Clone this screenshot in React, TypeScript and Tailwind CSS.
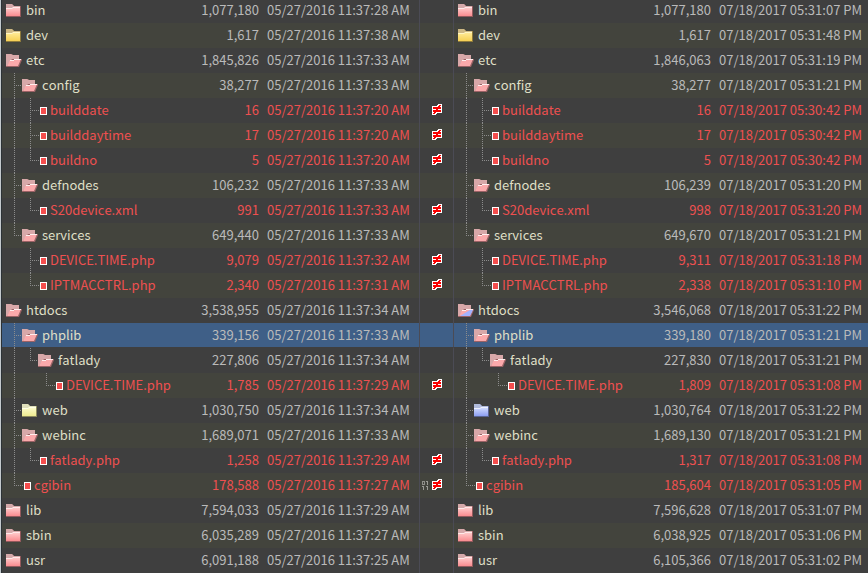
import React from "react";

type Kind = "closed" | "open" | "file";
type Tone = "pink" | "yellow" | "pale" | "blue" | "mixed";

interface Side {
  size: string;
  date: string;
  tone?: Tone;
}

interface Entry {
  name: string;
  kind: Kind;
  // One letter per indent level: "|" runs through, "t" branches, "l" ends, "." is blank
  guides: string;
  left: Side;
  right: Side;
  binary?: boolean;
  selected?: boolean;
}

const entry = (
  name: string,
  kind: Kind,
  guides: string,
  leftSize: string,
  leftTime: string,
  rightSize: string,
  rightTime: string,
  extra: { leftTone?: Tone; rightTone?: Tone; binary?: boolean; selected?: boolean } = {},
): Entry => ({
  name,
  kind,
  guides,
  left: { size: leftSize, date: `05/27/2016 ${leftTime} AM`, tone: extra.leftTone },
  right: { size: rightSize, date: `07/18/2017 ${rightTime} PM`, tone: extra.rightTone },
  binary: extra.binary,
  selected: extra.selected,
});

const entries: Entry[] = [
  entry("bin", "closed", "", "1,077,180", "11:37:28", "1,077,180", "05:31:07"),
  entry("dev", "closed", "", "1,617", "11:37:38", "1,617", "05:31:48", { leftTone: "yellow", rightTone: "yellow" }),
  entry("etc", "open", "", "1,845,826", "11:37:33", "1,846,063", "05:31:19"),
  entry("config", "open", "t", "38,277", "11:37:33", "38,277", "05:31:21"),
  entry("builddate", "file", "|t", "16", "11:37:20", "16", "05:30:42"),
  entry("builddaytime", "file", "|t", "17", "11:37:20", "17", "05:30:42"),
  entry("buildno", "file", "|l", "5", "11:37:20", "5", "05:30:42"),
  entry("defnodes", "open", "t", "106,232", "11:37:33", "106,239", "05:31:20"),
  entry("S20device.xml", "file", "|l", "991", "11:37:33", "998", "05:31:20"),
  entry("services", "open", "l", "649,440", "11:37:33", "649,670", "05:31:21"),
  entry("DEVICE.TIME.php", "file", ".t", "9,079", "11:37:32", "9,311", "05:31:18"),
  entry("IPTMACCTRL.php", "file", ".l", "2,340", "11:37:31", "2,338", "05:31:10"),
  entry("htdocs", "open", "", "3,538,955", "11:37:34", "3,546,068", "05:31:22", { rightTone: "mixed" }),
  entry("phplib", "open", "t", "339,156", "11:37:33", "339,180", "05:31:21", { selected: true }),
  entry("fatlady", "open", "|l", "227,806", "11:37:34", "227,830", "05:31:21"),
  entry("DEVICE.TIME.php", "file", "|.l", "1,785", "11:37:29", "1,809", "05:31:08"),
  entry("web", "closed", "t", "1,030,750", "11:37:34", "1,030,764", "05:31:22", { leftTone: "pale", rightTone: "blue" }),
  entry("webinc", "open", "t", "1,689,071", "11:37:33", "1,689,130", "05:31:21"),
  entry("fatlady.php", "file", "|l", "1,258", "11:37:29", "1,317", "05:31:08"),
  entry("cgibin", "file", "l", "178,588", "11:37:27", "185,604", "05:31:05", { binary: true }),
  entry("lib", "closed", "", "7,594,033", "11:37:29", "7,596,628", "05:31:07"),
  entry("sbin", "closed", "", "6,035,289", "11:37:27", "6,038,925", "05:31:06"),
  entry("usr", "closed", "", "6,091,188", "11:37:25", "6,105,366", "05:31:02"),
];

const palette: Record<Tone, { top: string; bottom: string; tab: string; edge: string; shine: string }> = {
  pink: { top: "#ffc9c9", bottom: "#f98c90", tab: "#d5a9aa", edge: "#93595c", shine: "#ffe9e9" },
  yellow: { top: "#ffea94", bottom: "#f6d054", tab: "#cdb885", edge: "#8e7a3c", shine: "#fff6c4" },
  pale: { top: "#fbfac8", bottom: "#eeeb90", tab: "#dfdfbb", edge: "#8d8b5e", shine: "#ffffe6" },
  blue: { top: "#cfd9ff", bottom: "#8d9ff2", tab: "#b1bbdc", edge: "#5a6594", shine: "#eef1ff" },
  mixed: { top: "#ffc9c9", bottom: "#f98c90", tab: "#d5a9aa", edge: "#93595c", shine: "#ffe9e9" },
};

function Gradients() {
  return (
    <svg className="absolute size-0" aria-hidden="true">
      <defs>
        {(Object.keys(palette) as Tone[]).map((tone) => (
          <linearGradient key={tone} id={`fill-${tone}`} x1="0" y1="0" x2="0" y2="1">
            <stop offset="0" stopColor={palette[tone].top} />
            <stop offset="1" stopColor={palette[tone].bottom} />
          </linearGradient>
        ))}
      </defs>
    </svg>
  );
}

function ClosedFolder({ tone }: { tone: Tone }) {
  const c = palette[tone];
  return (
    <svg width="16" height="13" viewBox="0 0 16 13" className="shrink-0" aria-hidden="true">
      <path d="M0 0H6L8 2H15V13H0Z" fill={c.edge} />
      <path d="M0 0H6L8 2H14V4H0Z" fill={c.tab} />
      <rect x="0" y="4" width="14" height="8" fill={`url(#fill-${tone})`} />
      <path d="M0 4H6L7 3H14V4H7L6 5H0Z" fill={c.shine} />
    </svg>
  );
}

function OpenFolder({ tone }: { tone: Tone }) {
  return (
    <svg width="16" height="13" viewBox="0 0 16 13" className="shrink-0" aria-hidden="true">
      <path d="M0 0H5L7 1H13V5H16V6L13 13H0Z" fill="#9a6265" />
      <path d="M0 0H5L7 1H13V5H6L1 12H0Z" fill="#d8a8a9" />
      <path d="M1 12L4 6H8L9 5H15L12 12Z" fill="#fba9ab" />
      {tone === "mixed" && <path d="M2 12L12 6H15L12 12Z" fill="#a3b3ff" />}
      <path d="M4 6H8V7H4ZM8 5H15V6H8Z" fill="#ffeeee" />
    </svg>
  );
}

function FileMark() {
  return (
    <svg width="12" height="25" viewBox="0 0 12 25" className="shrink-0" shapeRendering="crispEdges" aria-hidden="true">
      <rect x="0" y="12" width="1" height="1" fill="#8c8c8c" />
      <rect x="2" y="9" width="7" height="8" fill="#ffffff" />
      <rect x="3" y="10" width="5" height="6" fill="#f44d4d" />
    </svg>
  );
}

function Guide({ shape }: { shape: string }) {
  return (
    <svg width="16" height="25" viewBox="0 0 16 25" className="shrink-0" shapeRendering="crispEdges" aria-hidden="true">
      <g stroke="#8c8c8c" strokeWidth="1" strokeDasharray="1 1">
        {(shape === "|" || shape === "t") && <line x1="8.5" y1="0" x2="8.5" y2="25" />}
        {shape === "l" && <line x1="8.5" y1="0" x2="8.5" y2="13" />}
        {(shape === "t" || shape === "l") && <line x1="8" y1="12.5" x2="16" y2="12.5" />}
      </g>
    </svg>
  );
}

function NotEqual() {
  return (
    <svg width="10" height="13" viewBox="0 0 10 13" shapeRendering="crispEdges" aria-label="Different" role="img">
      <path d="M6 0H10V9H5V10H4V11H0V2H5V1H6Z" fill="#ffffff" />
      <path d="M7 1H9V2H8V3H9V5H6V6H9V8H4V9H3V10H1V9H2V8H1V6H4V5H1V3H6V2H7Z" fill="#fb0000" />
    </svg>
  );
}

function BinaryMark() {
  return (
    <svg width="7" height="9" viewBox="0 0 7 9" shapeRendering="crispEdges" aria-label="Binary" role="img">
      <path d="M0 0H3V4H0ZM1 1V3H2V1Z" fill="#8f8f89" fillRule="evenodd" />
      <path d="M4 0H6V4H5V1H4ZM0 5H2V9H1V6H0ZM4 5H6V9H5V6H4Z" fill="#9b9b95" />
    </svg>
  );
}

function SideCells({ item, side, divided }: { item: Entry; side: Side; divided?: boolean }) {
  const tone = side.tone ?? "pink";
  const isFile = item.kind === "file";
  const valueColor = isFile ? "text-[#ee5050]" : "text-[#bababa]";
  return (
    <>
      <th scope="row" className={`p-0 text-left align-top font-normal ${divided ? "border-l border-[#4b4b55]" : ""}`}>
        <div className={`flex items-center pl-1 ${item.selected ? "h-6" : "h-[25px]"}`}>
          {[...item.guides].map((shape, i) => (
            <Guide key={i} shape={shape} />
          ))}
          {item.kind === "closed" && <ClosedFolder tone={tone} />}
          {item.kind === "open" && <OpenFolder tone={tone} />}
          {isFile && <FileMark />}
          <span className={`self-start whitespace-nowrap ${isFile ? "text-[#ee5050]" : "pl-1 text-[#dfdfc6]"}`}>
            {item.name}
          </span>
        </div>
      </th>
      <td className={`p-0 text-right align-top ${valueColor}`}>{side.size}</td>
      <td className={`p-0 pl-2 align-top whitespace-nowrap ${valueColor}`}>{side.date}</td>
    </>
  );
}

export default function App() {
  return (
    <main className="min-h-screen overflow-hidden border-l border-[#c3c9cd] bg-[#3f3f3f] font-['Noto_Sans_CJK_SC','Noto_Sans',sans-serif] text-[13px] leading-[23px] [font-kerning:none]">
      <Gradients />
      <div className="-mt-0.5 border-l border-[#2c3236]">
        <table className="w-full table-fixed border-separate border-spacing-0">
          <colgroup>
            <col />
            <col className="w-[64px]" />
            <col className="w-[160px]" />
            <col className="w-[34px]" />
            <col />
            <col className="w-[65px]" />
            <col className="w-[157px]" />
          </colgroup>
          <tbody>
            {entries.map((item, i) => (
              <tr
                key={i}
                className={
                  item.selected
                    ? "bg-[#3f5f87] *:border-b *:border-b-[#3f3f3f]"
                    : i % 2
                      ? "bg-[#43443d]"
                      : "bg-[#3f3f3f]"
                }
              >
                <SideCells item={item} side={item.left} />
                <td className="border-l border-[#4b4b55] p-0">
                  <div className={`flex items-center justify-end gap-[3px] pr-[11px] ${item.selected ? "h-6" : "h-[25px]"}`}>
                    {item.binary && <BinaryMark />}
                    {item.kind === "file" && <NotEqual />}
                  </div>
                </td>
                <SideCells item={item} side={item.right} divided />
              </tr>
            ))}
          </tbody>
        </table>
      </div>
    </main>
  );
}
